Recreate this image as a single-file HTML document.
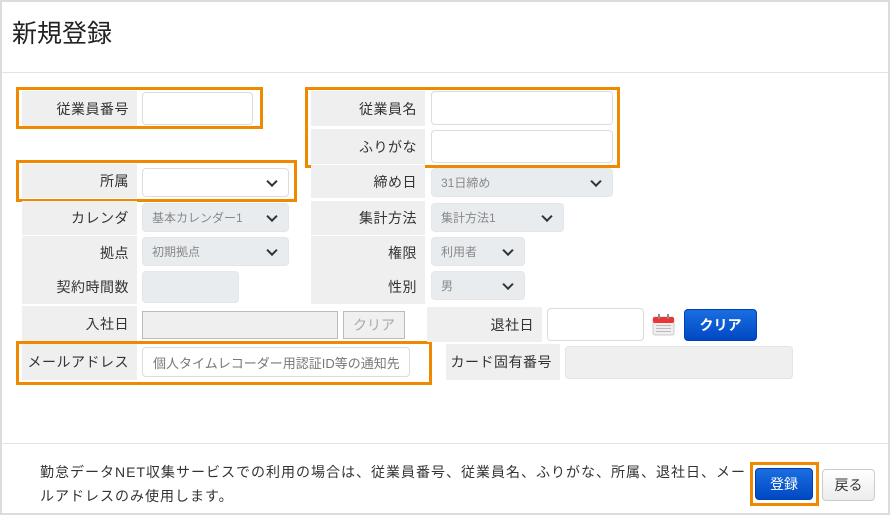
<!DOCTYPE html>
<html><head><meta charset="utf-8"><style>
*{box-sizing:border-box;margin:0;padding:0}
body{width:890px;height:515px;background:#fff;font-family:"Liberation Sans","Noto Sans CJK JP",sans-serif;color:#333;position:relative;overflow:hidden}
.a{position:absolute}
.frame{left:0;top:0;width:890px;height:515px;border:2px solid #dcdcdc;border-right-width:2px}
.lb{background:#efefef;font-size:14px;letter-spacing:0.5px;text-align:right;padding-right:8px;display:flex;align-items:center;justify-content:flex-end}
.in{background:#fff;border:1px solid #dcdcdc;border-radius:4px}
.gr{background:#e9ecef;border:1px solid #e3e6ea;border-radius:4px;font-size:12px;color:#888;display:flex;align-items:center;padding-left:9px}
.ob{border:3px solid #ef8a00}
.chev{position:absolute;right:12px;top:50%;width:8px;height:8px;border-right:2px solid #333;border-bottom:2px solid #333;transform:translateY(-70%) rotate(45deg)}
.btn{border-radius:4px;font-size:14px;display:flex;align-items:center;justify-content:center}
.blue{background:linear-gradient(#1a6ee0,#0048c4);color:#fff;border:1px solid #0040b0}
</style></head><body>
<div class="a frame"></div>
<div class="a" style="left:12px;top:14px;font-size:25px;color:#222">新規登録</div>
<div class="a" style="left:2px;top:72px;width:886px;height:1px;background:#e3e3e3"></div>

<div class="a lb" style="left:22px;top:91px;width:115px;height:35px">従業員番号</div>
<div class="a in" style="left:142px;top:92px;width:111px;height:33px"></div>
<div class="a ob" style="left:16px;top:87px;width:247px;height:42px"></div>

<div class="a lb" style="left:22px;top:164px;width:115px;height:34px">所属</div>
<div class="a in" style="left:142px;top:168px;width:147px;height:29px"><span class="chev"></span></div>
<div class="a ob" style="left:16px;top:160px;width:281px;height:42px"></div>

<div class="a lb" style="left:22px;top:201px;width:115px;height:34px">カレンダ</div>
<div class="a gr" style="left:142px;top:203px;width:147px;height:29px">基本カレンダー1<span class="chev"></span></div>
<div class="a lb" style="left:22px;top:236px;width:115px;height:34px">拠点</div>
<div class="a gr" style="left:142px;top:237px;width:147px;height:29px">初期拠点<span class="chev"></span></div>
<div class="a lb" style="left:22px;top:270px;width:115px;height:34px">契約時間数</div>
<div class="a gr" style="left:142px;top:271px;width:97px;height:32px"></div>

<div class="a lb" style="left:22px;top:306px;width:115px;height:35px">入社日</div>
<div class="a" style="left:142px;top:311px;width:196px;height:28px;background:#efefef;border:1px solid #bbb"></div>
<div class="a btn" style="left:343px;top:311px;width:62px;height:28px;background:#f0f0f0;border:1px solid #bbb;color:#aaa;border-radius:0">クリア</div>

<div class="a lb" style="left:22px;top:344px;width:115px;height:36px">メールアドレス</div>
<div class="a in" style="left:142px;top:347px;width:268px;height:30px;font-size:13px;color:#777;padding-left:10px;display:flex;align-items:center">個人タイムレコーダー用認証ID等の通知先</div>
<div class="a ob" style="left:16px;top:341px;width:416px;height:44px"></div>

<div class="a lb" style="left:311px;top:91px;width:114px;height:35px">従業員名</div>
<div class="a in" style="left:431px;top:91px;width:182px;height:34px"></div>
<div class="a lb" style="left:311px;top:129px;width:114px;height:35px">ふりがな</div>
<div class="a in" style="left:431px;top:130px;width:182px;height:33px"></div>
<div class="a ob" style="left:305px;top:87px;width:315px;height:81px"></div>

<div class="a lb" style="left:311px;top:165px;width:114px;height:33px">締め日</div>
<div class="a gr" style="left:431px;top:168px;width:182px;height:29px">31日締め<span class="chev"></span></div>
<div class="a lb" style="left:311px;top:201px;width:114px;height:34px">集計方法</div>
<div class="a gr" style="left:431px;top:203px;width:133px;height:29px">集計方法1<span class="chev"></span></div>
<div class="a lb" style="left:311px;top:236px;width:114px;height:34px">権限</div>
<div class="a gr" style="left:431px;top:237px;width:94px;height:29px">利用者<span class="chev"></span></div>
<div class="a lb" style="left:311px;top:270px;width:114px;height:34px">性別</div>
<div class="a gr" style="left:431px;top:271px;width:94px;height:29px">男<span class="chev"></span></div>

<div class="a lb" style="left:427px;top:307px;width:115px;height:35px">退社日</div>
<div class="a in" style="left:547px;top:308px;width:97px;height:33px"></div>
<svg class="a" style="left:652px;top:314px" width="23" height="22" viewBox="0 0 23 22"><rect x="1" y="3" width="21" height="18" rx="2" fill="#eee" stroke="#ccc"/><rect x="1" y="3" width="21" height="6" rx="2" fill="#e33"/><rect x="6" y="0" width="2" height="5" fill="#888"/><rect x="15" y="0" width="2" height="5" fill="#888"/><g fill="#bbb"><rect x="4" y="11" width="15" height="1"/><rect x="4" y="14" width="15" height="1"/><rect x="4" y="17" width="15" height="1"/></g></svg>
<div class="a btn blue" style="left:684px;top:309px;width:73px;height:32px;font-weight:bold">クリア</div>

<div class="a lb" style="left:446px;top:344px;width:114px;height:36px">カード固有番号</div>
<div class="a" style="left:565px;top:346px;width:228px;height:33px;background:#efefef;border:1px solid #e3e3e3;border-radius:4px"></div>

<div class="a" style="left:2px;top:443px;width:886px;height:1px;background:#e3e3e3"></div>
<div class="a" style="left:40px;top:460px;width:760px;font-size:14px;letter-spacing:1px;line-height:24px;color:#333;white-space:nowrap">勤怠データNET収集サービスでの利用の場合は、従業員番号、従業員名、ふりがな、所属、退社日、メー<br>ルアドレスのみ使用します。</div>
<div class="a btn blue" style="left:755px;top:468px;width:58px;height:32px">登録</div>
<div class="a ob" style="left:750px;top:462px;width:69px;height:44px"></div>
<div class="a btn" style="left:822px;top:469px;width:53px;height:32px;background:linear-gradient(#fff,#ececec);border:1px solid #ccc;color:#333">戻る</div>
</body></html>
